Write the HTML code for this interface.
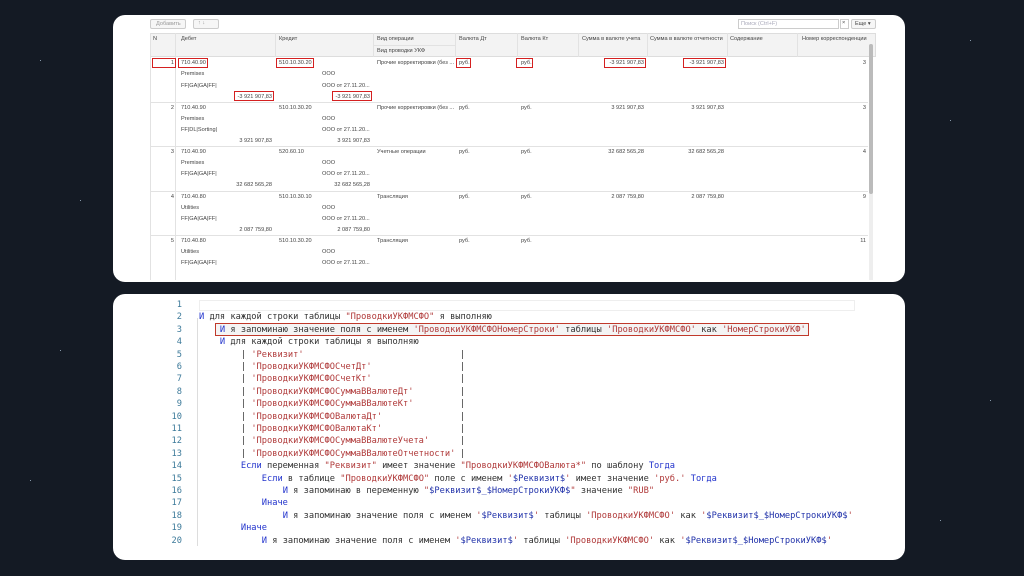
<!DOCTYPE html>
<html><head><meta charset="utf-8"><style>
*{margin:0;padding:0;box-sizing:border-box}
body{width:1024px;height:576px;background:#141a24;position:relative;overflow:hidden;font-family:"Liberation Sans",sans-serif}
.p{position:absolute;background:#fff;border-radius:12px}
.t{position:absolute;font-size:5.6px;color:#444;white-space:nowrap}
.r{text-align:right}
.hl{position:absolute;border:1.5px solid #d42020}
.vl{position:absolute;width:1px;background:#e2e2e2}
.hr{position:absolute;height:1px;background:#e2e2e2}
.ln{position:absolute;width:22px;text-align:right;color:#3d7a9a;font-family:"DejaVu Sans Mono",monospace;font-size:8.7px}
.cl{position:absolute;left:199px;white-space:pre;font-family:"DejaVu Sans Mono",monospace;font-size:8.7px;color:#333}
.pp{position:absolute;left:460px;font-family:"DejaVu Sans Mono",monospace;font-size:8.7px;color:#333}
.k{color:#2233cc}.s{color:#b03a3a}.v{color:#2233aa}
.star{position:absolute;width:1px;height:1px;background:#8899aa}
</style></head><body>
<div class="star" style="left:40px;top:60px"></div><div class="star" style="left:80px;top:200px"></div><div class="star" style="left:950px;top:120px"></div><div class="star" style="left:990px;top:400px"></div><div class="star" style="left:30px;top:480px"></div><div class="star" style="left:60px;top:350px"></div><div class="star" style="left:940px;top:520px"></div><div class="star" style="left:970px;top:40px"></div>

<div class="p" style="left:113px;top:15px;width:792px;height:267px"></div>
<div class="p" style="left:113px;top:294px;width:792px;height:266px"></div>

<div style="position:absolute;left:150px;top:19px;width:36px;height:10px;border:1px solid #ccc;border-radius:2px;background:#f6f6f6"></div>
<div class="t" style="left:156px;top:21px;color:#999">Добавить</div>
<div style="position:absolute;left:193px;top:19px;width:26px;height:10px;border:1px solid #ccc;border-radius:2px;background:#f6f6f6"></div>
<div class="t" style="left:198px;top:20px;color:#999">↑ ↓</div>
<div style="position:absolute;left:738px;top:19px;width:101px;height:10px;border:1px solid #ccc;background:#fff"></div>
<div class="t" style="left:741px;top:21px;color:#aab">Поиск (Ctrl+F)</div>
<div style="position:absolute;left:840px;top:19px;width:9px;height:10px;border:1px solid #ccc"></div>
<div class="t" style="left:842px;top:20px">×</div>
<div style="position:absolute;left:851px;top:19px;width:25px;height:10px;border:1px solid #ccc;border-radius:2px;background:#f6f6f6"></div>
<div class="t" style="left:855px;top:21px">Еще ▾</div>

<div style="position:absolute;left:150px;top:33px;width:726px;height:24px;background:#f3f3f3;border:1px solid #ddd"></div>
<div class="hr" style="left:373px;top:45px;width:82px"></div>
<div class="t" style="left:153px;top:36px">N</div>
<div class="t" style="left:181px;top:36px">Дебет</div>
<div class="t" style="left:279px;top:36px">Кредит</div>
<div class="t" style="left:377px;top:36px">Вид операции</div>
<div class="t" style="left:377px;top:48px">Вид проводки УКФ</div>
<div class="t" style="left:459px;top:36px">Валюта Дт</div>
<div class="t" style="left:521px;top:36px">Валюта Кт</div>
<div class="t" style="left:582px;top:36px">Сумма в валюте учета</div>
<div class="t" style="left:650px;top:36px">Сумма в валюте отчетности</div>
<div class="t" style="left:730px;top:36px">Содержание</div>
<div class="t" style="left:802px;top:36px">Номер корреспонденции</div>
<div class="vl" style="left:175px;top:33px;height:247px"></div>
<div class="vl" style="left:275px;top:33px;height:24px"></div>
<div class="vl" style="left:373px;top:33px;height:24px"></div>
<div class="vl" style="left:455px;top:33px;height:24px"></div>
<div class="vl" style="left:517px;top:33px;height:24px"></div>
<div class="vl" style="left:578px;top:33px;height:24px"></div>
<div class="vl" style="left:647px;top:33px;height:24px"></div>
<div class="vl" style="left:727px;top:33px;height:24px"></div>
<div class="vl" style="left:797px;top:33px;height:24px"></div>
<div class="vl" style="left:150px;top:33px;height:247px"></div>
<div style="position:absolute;left:869px;top:44px;width:4px;height:236px;background:#eee"></div>
<div style="position:absolute;left:869px;top:44px;width:4px;height:150px;background:#bbb;border-radius:2px"></div>

<div class="hr" style="left:150px;top:102px;width:718px"></div>
<div class="hr" style="left:150px;top:146px;width:718px"></div>
<div class="hr" style="left:150px;top:191px;width:718px"></div>
<div class="hr" style="left:150px;top:235px;width:718px"></div>

<div class="t r" style="left:150px;top:60px;width:24px">1</div>
<div class="t" style="left:181px;top:60px">710.40.90</div>
<div class="t" style="left:181px;top:71px">Premises</div>
<div class="t" style="left:181px;top:83px">FF|GA|GA|FF|</div>
<div class="t r" style="left:200px;top:94px;width:72px">-3 921 907,83</div>
<div class="t" style="left:279px;top:60px">510.10.30.20</div>
<div class="t" style="left:322px;top:71px">ООО</div>
<div class="t" style="left:322px;top:83px">ООО от 27.11.20...</div>
<div class="t r" style="left:300px;top:94px;width:70px">-3 921 907,83</div>
<div class="t" style="left:377px;top:60px">Прочие корректировки (без ...</div>
<div class="t" style="left:459px;top:60px">руб.</div>
<div class="t" style="left:521px;top:60px">руб.</div>
<div class="t r" style="left:580px;top:60px;width:64px">-3 921 907,83</div>
<div class="t r" style="left:650px;top:60px;width:74px">-3 921 907,83</div>
<div class="t r" style="left:800px;top:60px;width:66px">3</div>
<div class="hl" style="left:152px;top:58px;width:24px;height:10px"></div>
<div class="hl" style="left:178px;top:58px;width:30px;height:10px"></div>
<div class="hl" style="left:234px;top:91px;width:40px;height:10px"></div>
<div class="hl" style="left:276px;top:58px;width:38px;height:10px"></div>
<div class="hl" style="left:332px;top:91px;width:40px;height:10px"></div>
<div class="hl" style="left:456px;top:58px;width:15px;height:10px"></div>
<div class="hl" style="left:516px;top:58px;width:17px;height:10px"></div>
<div class="hl" style="left:604px;top:58px;width:42px;height:10px"></div>
<div class="hl" style="left:683px;top:58px;width:43px;height:10px"></div>

<div class="t r" style="left:150px;top:105px;width:24px">2</div>
<div class="t" style="left:181px;top:105px">710.40.90</div>
<div class="t" style="left:181px;top:116px">Premises</div>
<div class="t" style="left:181px;top:127px">FF|DL|Sorting|</div>
<div class="t r" style="left:200px;top:138px;width:72px">3 921 907,83</div>
<div class="t" style="left:279px;top:105px">510.10.30.20</div>
<div class="t" style="left:322px;top:116px">ООО</div>
<div class="t" style="left:322px;top:127px">ООО от 27.11.20...</div>
<div class="t r" style="left:300px;top:138px;width:70px">3 921 907,83</div>
<div class="t" style="left:377px;top:105px">Прочие корректировки (без ...</div>
<div class="t" style="left:459px;top:105px">руб.</div>
<div class="t" style="left:521px;top:105px">руб.</div>
<div class="t r" style="left:580px;top:105px;width:64px">3 921 907,83</div>
<div class="t r" style="left:650px;top:105px;width:74px">3 921 907,83</div>
<div class="t r" style="left:800px;top:105px;width:66px">3</div>

<div class="t r" style="left:150px;top:149px;width:24px">3</div>
<div class="t" style="left:181px;top:149px">710.40.90</div>
<div class="t" style="left:181px;top:160px">Premises</div>
<div class="t" style="left:181px;top:171px">FF|GA|GA|FF|</div>
<div class="t r" style="left:200px;top:182px;width:72px">32 682 565,28</div>
<div class="t" style="left:279px;top:149px">520.60.10</div>
<div class="t" style="left:322px;top:160px">ООО</div>
<div class="t" style="left:322px;top:171px">ООО от 27.11.20...</div>
<div class="t r" style="left:300px;top:182px;width:70px">32 682 565,28</div>
<div class="t" style="left:377px;top:149px">Учетные операции</div>
<div class="t" style="left:459px;top:149px">руб.</div>
<div class="t" style="left:521px;top:149px">руб.</div>
<div class="t r" style="left:580px;top:149px;width:64px">32 682 565,28</div>
<div class="t r" style="left:650px;top:149px;width:74px">32 682 565,28</div>
<div class="t r" style="left:800px;top:149px;width:66px">4</div>

<div class="t r" style="left:150px;top:194px;width:24px">4</div>
<div class="t" style="left:181px;top:194px">710.40.80</div>
<div class="t" style="left:181px;top:205px">Utilities</div>
<div class="t" style="left:181px;top:216px">FF|GA|GA|FF|</div>
<div class="t r" style="left:200px;top:227px;width:72px">2 087 759,80</div>
<div class="t" style="left:279px;top:194px">510.10.30.10</div>
<div class="t" style="left:322px;top:205px">ООО</div>
<div class="t" style="left:322px;top:216px">ООО от 27.11.20...</div>
<div class="t r" style="left:300px;top:227px;width:70px">2 087 759,80</div>
<div class="t" style="left:377px;top:194px">Трансляция</div>
<div class="t" style="left:459px;top:194px">руб.</div>
<div class="t" style="left:521px;top:194px">руб.</div>
<div class="t r" style="left:580px;top:194px;width:64px">2 087 759,80</div>
<div class="t r" style="left:650px;top:194px;width:74px">2 087 759,80</div>
<div class="t r" style="left:800px;top:194px;width:66px">9</div>

<div class="t r" style="left:150px;top:238px;width:24px">5</div>
<div class="t" style="left:181px;top:238px">710.40.80</div>
<div class="t" style="left:181px;top:249px">Utilities</div>
<div class="t" style="left:181px;top:260px">FF|GA|GA|FF|</div>
<div class="t" style="left:279px;top:238px">510.10.30.20</div>
<div class="t" style="left:322px;top:249px">ООО</div>
<div class="t" style="left:322px;top:260px">ООО от 27.11.20...</div>
<div class="t" style="left:377px;top:238px">Трансляция</div>
<div class="t" style="left:459px;top:238px">руб.</div>
<div class="t" style="left:521px;top:238px">руб.</div>
<div class="t r" style="left:800px;top:238px;width:66px">11</div>

<div style="position:absolute;left:199px;top:300px;width:656px;height:11px;border:1px solid #eee"></div>
<div style="position:absolute;left:197px;top:318px;width:1px;height:228px;background:#ddd"></div>
<div class="ln" style="left:160px;top:300px">1</div>
<div class="ln" style="left:160px;top:312.4px">2</div>
<div class="ln" style="left:160px;top:324.8px">3</div>
<div class="ln" style="left:160px;top:337.2px">4</div>
<div class="ln" style="left:160px;top:349.6px">5</div>
<div class="ln" style="left:160px;top:362px">6</div>
<div class="ln" style="left:160px;top:374.4px">7</div>
<div class="ln" style="left:160px;top:386.8px">8</div>
<div class="ln" style="left:160px;top:399.2px">9</div>
<div class="ln" style="left:160px;top:411.6px">10</div>
<div class="ln" style="left:160px;top:424px">11</div>
<div class="ln" style="left:160px;top:436.4px">12</div>
<div class="ln" style="left:160px;top:448.8px">13</div>
<div class="ln" style="left:160px;top:461.2px">14</div>
<div class="ln" style="left:160px;top:473.6px">15</div>
<div class="ln" style="left:160px;top:486px">16</div>
<div class="ln" style="left:160px;top:498.4px">17</div>
<div class="ln" style="left:160px;top:510.8px">18</div>
<div class="ln" style="left:160px;top:523.2px">19</div>
<div class="ln" style="left:160px;top:535.6px">20</div>

<div class="cl" style="top:312.4px"><span class="k">И</span> для каждой строки таблицы <span class="s">"ПроводкиУКФМСФО"</span> я выполняю</div>
<div style="position:absolute;left:215px;top:323px;width:594px;height:13px;border:1.5px solid #c0392b;background:#f4f4f4"></div>
<div class="cl" style="top:324.8px">    <span class="k">И</span> я запоминаю значение поля с именем <span class="s">'ПроводкиУКФМСФОНомерСтроки'</span> таблицы <span class="s">'ПроводкиУКФМСФО'</span> как <span class="s">'НомерСтрокиУКФ'</span></div>
<div class="cl" style="top:337.2px">    <span class="k">И</span> для каждой строки таблицы я выполняю</div>
<div class="cl" style="top:349.6px">        | <span class="s">'Реквизит'</span></div>
<div class="cl" style="top:362px">        | <span class="s">'ПроводкиУКФМСФОСчетДт'</span></div>
<div class="cl" style="top:374.4px">        | <span class="s">'ПроводкиУКФМСФОСчетКт'</span></div>
<div class="cl" style="top:386.8px">        | <span class="s">'ПроводкиУКФМСФОСуммаВВалютеДт'</span></div>
<div class="cl" style="top:399.2px">        | <span class="s">'ПроводкиУКФМСФОСуммаВВалютеКт'</span></div>
<div class="cl" style="top:411.6px">        | <span class="s">'ПроводкиУКФМСФОВалютаДт'</span></div>
<div class="cl" style="top:424px">        | <span class="s">'ПроводкиУКФМСФОВалютаКт'</span></div>
<div class="cl" style="top:436.4px">        | <span class="s">'ПроводкиУКФМСФОСуммаВВалютеУчета'</span></div>
<div class="cl" style="top:448.8px">        | <span class="s">'ПроводкиУКФМСФОСуммаВВалютеОтчетности'</span></div>
<div class="pp" style="top:349.6px">|</div><div class="pp" style="top:362px">|</div><div class="pp" style="top:374.4px">|</div><div class="pp" style="top:386.8px">|</div><div class="pp" style="top:399.2px">|</div><div class="pp" style="top:411.6px">|</div><div class="pp" style="top:424px">|</div><div class="pp" style="top:436.4px">|</div><div class="pp" style="top:448.8px">|</div>
<div class="cl" style="top:461.2px">        <span class="k">Если</span> переменная <span class="s">"Реквизит"</span> имеет значение <span class="s">"ПроводкиУКФМСФОВалюта*"</span> по шаблону <span class="k">Тогда</span></div>
<div class="cl" style="top:473.6px">            <span class="k">Если</span> в таблице <span class="s">"ПроводкиУКФМСФО"</span> поле с именем <span class="s">'<span class="v">$Реквизит$</span>'</span> имеет значение <span class="s">'руб.'</span> <span class="k">Тогда</span></div>
<div class="cl" style="top:486px">                <span class="k">И</span> я запоминаю в переменную <span class="s">"<span class="v">$Реквизит$_$НомерСтрокиУКФ$</span>"</span> значение <span class="s">"RUB"</span></div>
<div class="cl" style="top:498.4px">            <span class="k">Иначе</span></div>
<div class="cl" style="top:510.8px">                <span class="k">И</span> я запоминаю значение поля с именем <span class="s">'<span class="v">$Реквизит$</span>'</span> таблицы <span class="s">'ПроводкиУКФМСФО'</span> как <span class="s">'<span class="v">$Реквизит$_$НомерСтрокиУКФ$</span>'</span></div>
<div class="cl" style="top:523.2px">        <span class="k">Иначе</span></div>
<div class="cl" style="top:535.6px">            <span class="k">И</span> я запоминаю значение поля с именем <span class="s">'<span class="v">$Реквизит$</span>'</span> таблицы <span class="s">'ПроводкиУКФМСФО'</span> как <span class="s">'<span class="v">$Реквизит$_$НомерСтрокиУКФ$</span>'</span></div>
</body></html>
